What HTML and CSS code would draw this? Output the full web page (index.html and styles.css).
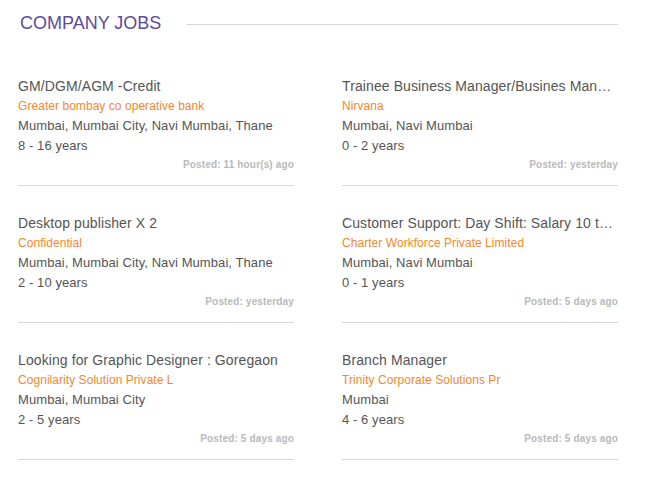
FILE: index.html
```html
<!DOCTYPE html>
<html>
<head>
<meta charset="utf-8">
<link rel="stylesheet" href="styles.css">
</head>
<body>
<section class="jobs">
  <header class="jobs-head">
    <h2 class="jobs-title">COMPANY JOBS</h2>
    <span class="jobs-rule"></span>
  </header>
  <div class="jobs-grid">
    <article class="job">
      <div class="job-title">GM/DGM/AGM -Credit</div>
      <div class="job-company">Greater bombay co operative bank</div>
      <div class="job-meta">Mumbai, Mumbai City, Navi Mumbai, Thane</div>
      <div class="job-meta">8 - 16 years</div>
      <div class="job-posted">Posted: 11 hour(s) ago</div>
    </article>
    <article class="job">
      <div class="job-title">Trainee Business Manager/Busines Manager - Sales</div>
      <div class="job-company">Nirvana</div>
      <div class="job-meta">Mumbai, Navi Mumbai</div>
      <div class="job-meta">0 - 2 years</div>
      <div class="job-posted">Posted: yesterday</div>
    </article>
    <article class="job">
      <div class="job-title">Desktop publisher X 2</div>
      <div class="job-company">Confidential</div>
      <div class="job-meta">Mumbai, Mumbai City, Navi Mumbai, Thane</div>
      <div class="job-meta">2 - 10 years</div>
      <div class="job-posted">Posted: yesterday</div>
    </article>
    <article class="job">
      <div class="job-title">Customer Support: Day Shift: Salary 10 to 15k</div>
      <div class="job-company">Charter Workforce Private Limited</div>
      <div class="job-meta">Mumbai, Navi Mumbai</div>
      <div class="job-meta">0 - 1 years</div>
      <div class="job-posted">Posted: 5 days ago</div>
    </article>
    <article class="job">
      <div class="job-title">Looking for Graphic Designer : Goregaon</div>
      <div class="job-company">Cognilarity Solution Private L</div>
      <div class="job-meta">Mumbai, Mumbai City</div>
      <div class="job-meta">2 - 5 years</div>
      <div class="job-posted">Posted: 5 days ago</div>
    </article>
    <article class="job">
      <div class="job-title">Branch Manager</div>
      <div class="job-company">Trinity Corporate Solutions Pr</div>
      <div class="job-meta">Mumbai</div>
      <div class="job-meta">4 - 6 years</div>
      <div class="job-posted">Posted: 5 days ago</div>
    </article>
  </div>
</section>
</body>
</html>
```
FILE: styles.css
```css
html, body {
  margin: 0;
  padding: 0;
  background: #ffffff;
}
body {
  font-family: "Liberation Sans", Arial, sans-serif;
}
.jobs {
  width: 600px;
  padding: 13px 0 0 18px;
}
.jobs-head {
  display: flex;
  align-items: center;
  height: 20px;
  padding-left: 2px;
}
.jobs-title {
  margin: 0;
  font-size: 18px;
  line-height: 20px;
  font-weight: normal;
  color: #5d4b9c;
  white-space: nowrap;
}
.jobs-rule {
  flex: 1;
  height: 1px;
  margin: 3px 0 0 26px;
  background: #d8d5e3;
}
.jobs-grid {
  display: grid;
  grid-template-columns: 276px 276px;
  column-gap: 48px;
  row-gap: 26px;
  margin-top: 42px;
}
.job {
  padding: 1px 0 11px;
  border-bottom: 1px solid #d9d7e3;
  min-width: 0;
}
.job-title {
  font-size: 14px;
  line-height: 20px;
  letter-spacing: 0.1px;
  color: #555555;
  white-space: nowrap;
  overflow: hidden;
  text-overflow: ellipsis;
}
.job-company {
  font-size: 12px;
  line-height: 20px;
  letter-spacing: 0.05px;
  color: #f5872d;
}
.job-meta {
  font-size: 13px;
  line-height: 20px;
  letter-spacing: 0.08px;
  color: #555555;
}
.job-posted {
  font-size: 10px;
  line-height: 18px;
  font-weight: bold;
  letter-spacing: 0.15px;
  color: #b9b9b9;
  text-align: right;
}
```
